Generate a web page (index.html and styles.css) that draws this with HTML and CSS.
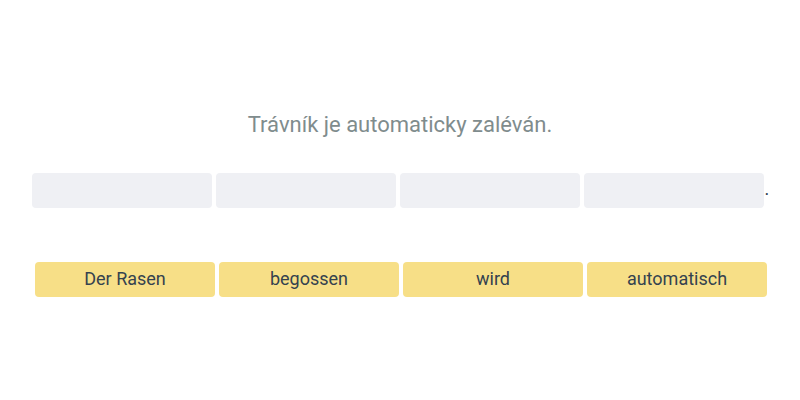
FILE: index.html
```html
<!DOCTYPE html>
<html lang="cs">
<head>
<meta charset="utf-8">
<link rel="stylesheet" href="styles.css">
</head>
<body>
<main class="exercise">
  <p class="prompt">Trávník je automaticky zaléván.</p>
  <div class="answer">
    <span class="slot"></span>
    <span class="slot"></span>
    <span class="slot"></span>
    <span class="slot"></span>
    <span class="period">.</span>
  </div>
  <div class="choices">
    <button class="word">Der Rasen</button>
    <button class="word">begossen</button>
    <button class="word">wird</button>
    <button class="word">automatisch</button>
  </div>
</main>
</body>
</html>
```
FILE: styles.css
```css
html, body {
  margin: 0;
  padding: 0;
  background: #ffffff;
  font-family: Roboto, "Liberation Sans", sans-serif;
}
.exercise {
  display: flex;
  flex-direction: column;
  align-items: center;
  padding-top: 110px;
}
.prompt {
  margin: 0;
  font-size: 22px;
  line-height: 30px;
  color: #7f8c8d;
}
.answer {
  display: flex;
  align-items: center;
  gap: 4px;
  margin-top: 33px;
}
.slot {
  width: 180px;
  height: 35px;
  background: #eff0f4;
  border-radius: 4px;
}
.period {
  font-size: 18px;
  line-height: 21px;
  color: #2c3e50;
  margin-left: -3px;
  margin-top: -4px;
  width: 4px;
}
.choices {
  display: flex;
  gap: 4px;
  margin-top: 54px;
  padding-left: 2px;
}
.word {
  width: 180px;
  height: 35px;
  border: none;
  border-radius: 4px;
  background: #f7df87;
  font-family: Roboto, "Liberation Sans", sans-serif;
  font-size: 18px;
  line-height: 21px;
  color: #34424f;
  padding: 0 0 2px;
}
```
